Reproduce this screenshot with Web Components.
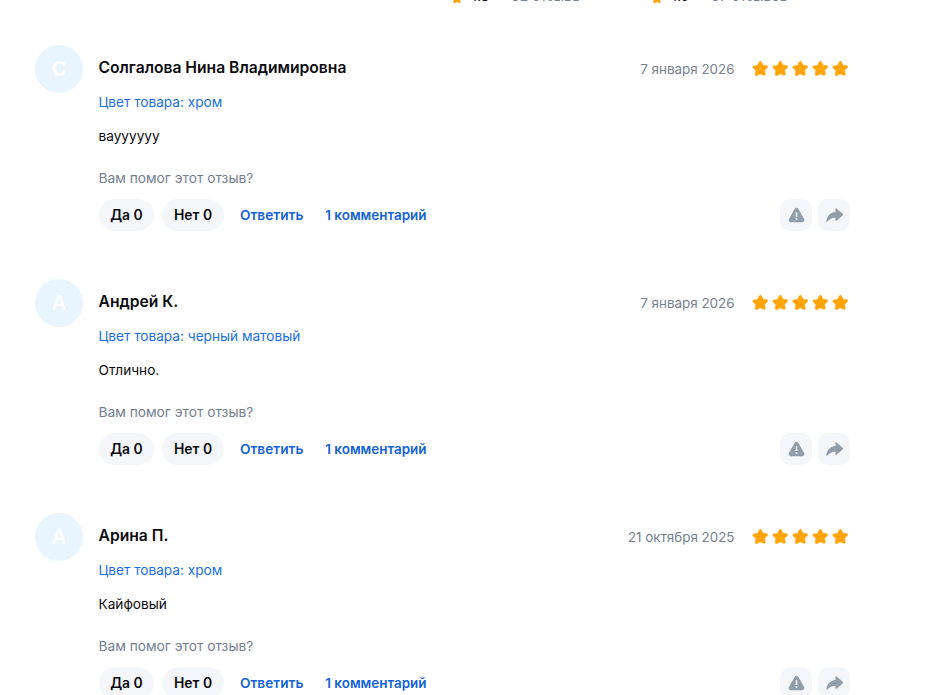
<!DOCTYPE html>
<html lang="ru">
<head>
<meta charset="utf-8">
<title>Отзывы</title>
<style>
  html, body { margin: 0; background: #fff; }
  body { font-family: Inter, "Noto Sans", sans-serif; color: #0b0b0f; overflow: hidden; height: 695px; }
</style>
</head>
<body>
<rating-summary></rating-summary>
<review-list>
  <review-card name="Солгалова Нина Владимировна" letter="С" date="7 января 2026" color="хром" text="вауууууу"></review-card>
  <review-card name="Андрей К." letter="А" date="7 января 2026" color="черный матовый" text="Отлично."></review-card>
  <review-card name="Арина П." letter="А" date="21 октября 2025" color="хром" text="Кайфовый"></review-card>
</review-list>

<script>
const STAR = '<path d="M12 1.600c.6 0 1.100.3 1.400.9l2.500 5 5.500.8c1.300.2 1.800 1.800.9 2.700l-4 3.900.9 5.500c.2 1.300-1.100 2.300-2.300 1.700L12 20l-4.900 2.600c-1.200.6-2.500-.4-2.300-1.700l.9-5.500-4-3.900c-.9-.9-.4-2.500.9-2.700l5.500-.8 2.500-5c.3-.6.8-.9 1.400-.9z"/>';

class RatingSummary extends HTMLElement {
  constructor() {
    super();
    this.attachShadow({ mode: 'open' });
    this.shadowRoot.innerHTML = `
      <style>
        :host { display: flex; height: 4px; overflow: hidden; padding-left: 451px; align-items: flex-end; font-size: 13.5px; line-height: 16px; }
        .item { display: flex; align-items: flex-end; gap: 6px; width: 200px; flex: none; }
        svg { width: 12px; height: 12px; fill: #ffa50a; flex: none; }
        .rate { width: 18px; }
        .grey { color: #75808f; font-size: 14px; margin-left: 18px; white-space: nowrap; }
      </style>
      <div class="item"><svg viewBox="0 0 24 24">${STAR}</svg><span class="rate">4.8</span><span class="grey">32 отзыва</span></div>
      <div class="item"><svg viewBox="0 0 24 24">${STAR}</svg><span class="rate">4.9</span><span class="grey">37 отзывов</span></div>
    `;
  }
}
customElements.define('rating-summary', RatingSummary);

class ReviewList extends HTMLElement {
  constructor() {
    super();
    this.attachShadow({ mode: 'open' });
    this.shadowRoot.innerHTML = `
      <style>
        :host { display: flex; flex-direction: column; gap: 48px; width: 815px; margin-left: 35px; padding-top: 41px; }
      </style>
      <slot></slot>
    `;
  }
}
customElements.define('review-list', ReviewList);

class ReviewCard extends HTMLElement {
  constructor() {
    super();
    this.attachShadow({ mode: 'open' });
    this.shadowRoot.innerHTML = `
      <style>
        :host { display: flex; gap: 15.5px; height: 186px; }
        .avatar { width: 48px; height: 48px; border-radius: 50%; background: #e9f5fe; color: #fff; font-size: 20px; font-weight: 600; display: flex; align-items: center; justify-content: center; flex: none; }
        .body { flex: 1; min-width: 0; display: flex; flex-direction: column; }
        .head { display: flex; align-items: center; height: 46px; }
        .name { font-size: 15.650px; font-weight: 600; line-height: 20px; flex: 1; }
        .date { font-size: 13.400px; color: #75808f; margin: 2px 17px 0 0; }
        .stars { display: flex; gap: 3.500px; margin-right: 2px; }
        .stars svg { width: 16.500px; height: 16.500px; fill: #ffa50a; stroke: #ffa50a; stroke-width: 1; stroke-linejoin: round; }
        .color { font-size: 13.650px; line-height: 20px; color: #1a6fe0; margin-top: 1px; }
        .text { font-size: 13.650px; line-height: 20px; margin-top: 14px; }
        .ask { font-size: 13.750px; line-height: 20px; color: #75808f; margin-top: 22px; }
        .actions { display: flex; align-items: center; margin-top: 11px; }
        .pill { height: 32px; border-radius: 16px; background: #f5f6fa; font-size: 13.900px; font-weight: 600; display: flex; align-items: center; justify-content: center; box-sizing: border-box; }
        .yes { width: 55px; margin-left: .5px; }
        .no { width: 62px; margin-left: 8px; }
        .link { font-weight: 600; color: #1463d8; }
        .reply { margin-left: 16px; font-size: 13.650px; }
        .comments { margin-left: 22px; font-size: 13.450px; }
        .tools { margin-left: auto; display: flex; gap: 6px; }
        .tool { width: 32px; height: 32px; border-radius: 10px; background: #f5f6fa; display: flex; align-items: center; justify-content: center; }
        .tool svg { width: 19px; height: 19px; fill: #929dac; }
      </style>
      <div class="avatar"></div>
      <div class="body">
        <div class="head">
          <span class="name"></span>
          <span class="date"></span>
          <span class="stars">
            ${`<svg viewBox="0 0 24 24">${STAR}</svg>`.repeat(5)}
          </span>
        </div>
        <div class="color"></div>
        <div class="text"></div>
        <div class="ask">Вам помог этот отзыв?</div>
        <div class="actions">
          <span class="pill yes">Да 0</span>
          <span class="pill no">Нет 0</span>
          <span class="link reply">Ответить</span>
          <span class="link comments">1 комментарий</span>
          <span class="tools">
            <span class="tool"><svg viewBox="0 0 24 24"><path fill-rule="evenodd" d="M9.800 3.500c1-1.800 3.400-1.800 4.400 0l7.400 13c1 1.800-.2 4-2.200 4H4.600c-2 0-3.200-2.200-2.200-4zM11 8v6h2V8zm1 7.300a1.200 1.200 0 1 0 0 2.400 1.200 1.200 0 0 0 0-2.400z"/></svg></span>
            <span class="tool"><svg viewBox="0 0 24 24"><path d="M13.200 3.900c0-.8.9-1.200 1.500-.7l7.900 6.900c.5.400.5 1.200 0 1.600l-7.900 6.900c-.6.500-1.500.1-1.500-.7v-3.200c-4.500 0-7.600 1.500-10.200 5-.5.6-1.400.2-1.300-.5C2.500 12.700 6.300 8.200 13.200 7.500z"/></svg></span>
          </span>
        </div>
      </div>
    `;
  }

  connectedCallback() {
    const root = this.shadowRoot;
    root.querySelector('.avatar').textContent = this.getAttribute('letter');
    root.querySelector('.name').textContent = this.getAttribute('name');
    root.querySelector('.date').textContent = this.getAttribute('date');
    root.querySelector('.color').textContent = 'Цвет товара: ' + this.getAttribute('color');
    root.querySelector('.text').textContent = this.getAttribute('text');
  }
}
customElements.define('review-card', ReviewCard);
</script>
</body>
</html>
